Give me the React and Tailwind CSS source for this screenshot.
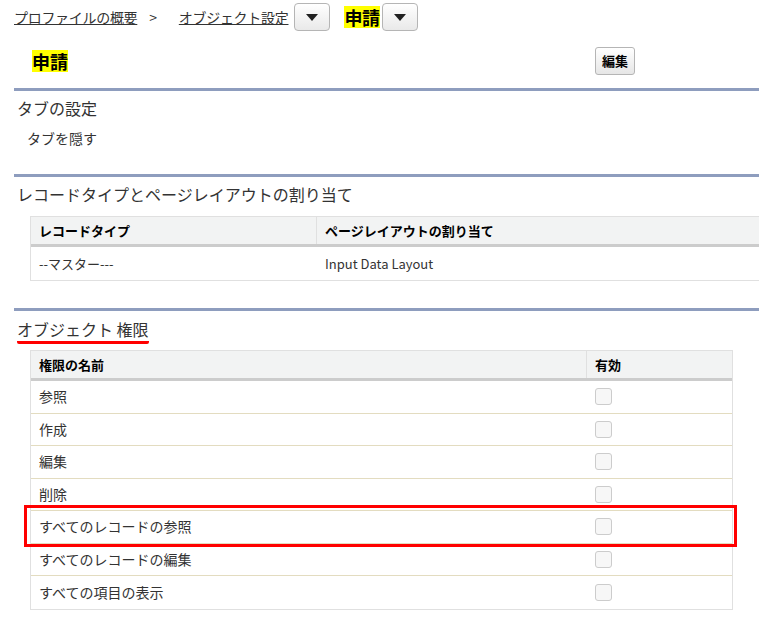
const font = { fontFamily: '"Noto Sans CJK JP", sans-serif' };

const DropBtn = () => (
  <button className="w-[36px] h-[28px] rounded-[4px] border border-[#b5b5b5] bg-gradient-to-b from-white to-[#e9e9e9] flex items-center justify-center">
    <span className="w-0 h-0 border-l-[6px] border-r-[6px] border-t-[7px] border-l-transparent border-r-transparent border-t-[#222]" />
  </button>
);

const Check = () => <span className="block w-[17px] h-[17px] rounded-[3px] border border-[#ccc] bg-[#f7f7f7]" />;

const perms = ['参照', '作成', '編集', '削除', 'すべてのレコードの参照', 'すべてのレコードの編集', 'すべての項目の表示'];

export default function App() {
  return (
    <div className="w-[759px] h-[627px] bg-white text-[#333] overflow-hidden relative" style={font}>
      {/* Breadcrumb */}
      <div className="flex items-center h-[34px] pl-[14px] text-[14px] tracking-[-0.3px]">
        <span className="underline">プロファイルの概要</span>
        <span className="ml-[12px] mr-[22px]">&gt;</span>
        <span className="underline mr-[6px]">オブジェクト設定</span>
        <DropBtn />
        <span className="ml-[14px] mr-[2px] bg-[#ffff00] text-[18px] font-bold leading-[22px] text-black">申請</span>
        <DropBtn />
      </div>

      <div className="flex items-center h-[54px] pl-[32px] pr-[124px] justify-between">
        <span className="bg-[#ffff00] text-[18px] font-bold leading-[22px] text-black">申請</span>
        <button className="h-[28px] px-[6px] rounded-[3px] border border-[#b5b5b5] bg-gradient-to-b from-white to-[#e6e6e6] text-[13px] font-bold text-black">編集</button>
      </div>

      <div className="ml-[14px] border-t-[3px] border-[#8e9dbe]">
        <div className="text-[16px] pt-[5px] pl-[3px] h-[32px]">タブの設定</div>
        <div className="text-[14px] pl-[13px] h-[51px] pt-[5px]">タブを隠す</div>
      </div>

      <div className="ml-[14px] border-t-[3px] border-[#8e9dbe]">
        <div className="text-[16px] pt-[5px] pl-[3px] h-[39px]">レコードタイプとページレイアウトの割り当て</div>
        <div className="ml-[16px] border border-[#e0e0e0] border-r-0 text-[13px]">
          <div className="flex h-[30px] bg-[#f2f3f3] border-b-[3px] border-[#cccccc] font-bold text-black">
            <div className="w-[286px] pl-[8px] flex items-center border-r border-[#e0e0e0]">レコードタイプ</div>
            <div className="flex-1 pl-[8px] flex items-center">ページレイアウトの割り当て</div>
          </div>
          <div className="flex h-[33px] items-center">
            <div className="w-[286px] pl-[8px]">--マスター---</div>
            <div className="flex-1 pl-[8px]">Input Data Layout</div>
          </div>
        </div>
        <div className="h-[27px]" />
      </div>

      <div className="ml-[14px] border-t-[3px] border-[#8e9dbe]">
        <div className="h-[39px] pl-[3px] pt-[6px]">
          <span className="text-[16px] inline-block pb-[1px] border-b-[3px] border-[#ff0000] rounded-[2px] leading-[22px]">オブジェクト 権限</span>
        </div>
        <div className="ml-[16px] w-[703px] border border-[#e0e0e0] text-[14px]">
          <div className="flex h-[30px] bg-[#f2f3f3] border-b-[3px] border-[#cccccc] font-bold text-black text-[13px]">
            <div className="w-[556px] pl-[8px] flex items-center border-r border-[#e0e0e0]">権限の名前</div>
            <div className="flex-1 pl-[8px] flex items-center">有効</div>
          </div>
          {perms.map((p, i) => (
            <div key={p} className={`flex h-[32.5px] items-center ${i < perms.length - 1 ? 'border-b border-[#e3dcc0]' : ''}`}>
              <div className="w-[556px] pl-[8px]">{p}</div>
              <div className="flex-1 pl-[8px]"><Check /></div>
            </div>
          ))}
        </div>
      </div>

      <div className="absolute left-[24px] top-[505px] w-[713px] h-[42px] border-[3px] border-[#ff0000]" />
    </div>
  );
}
